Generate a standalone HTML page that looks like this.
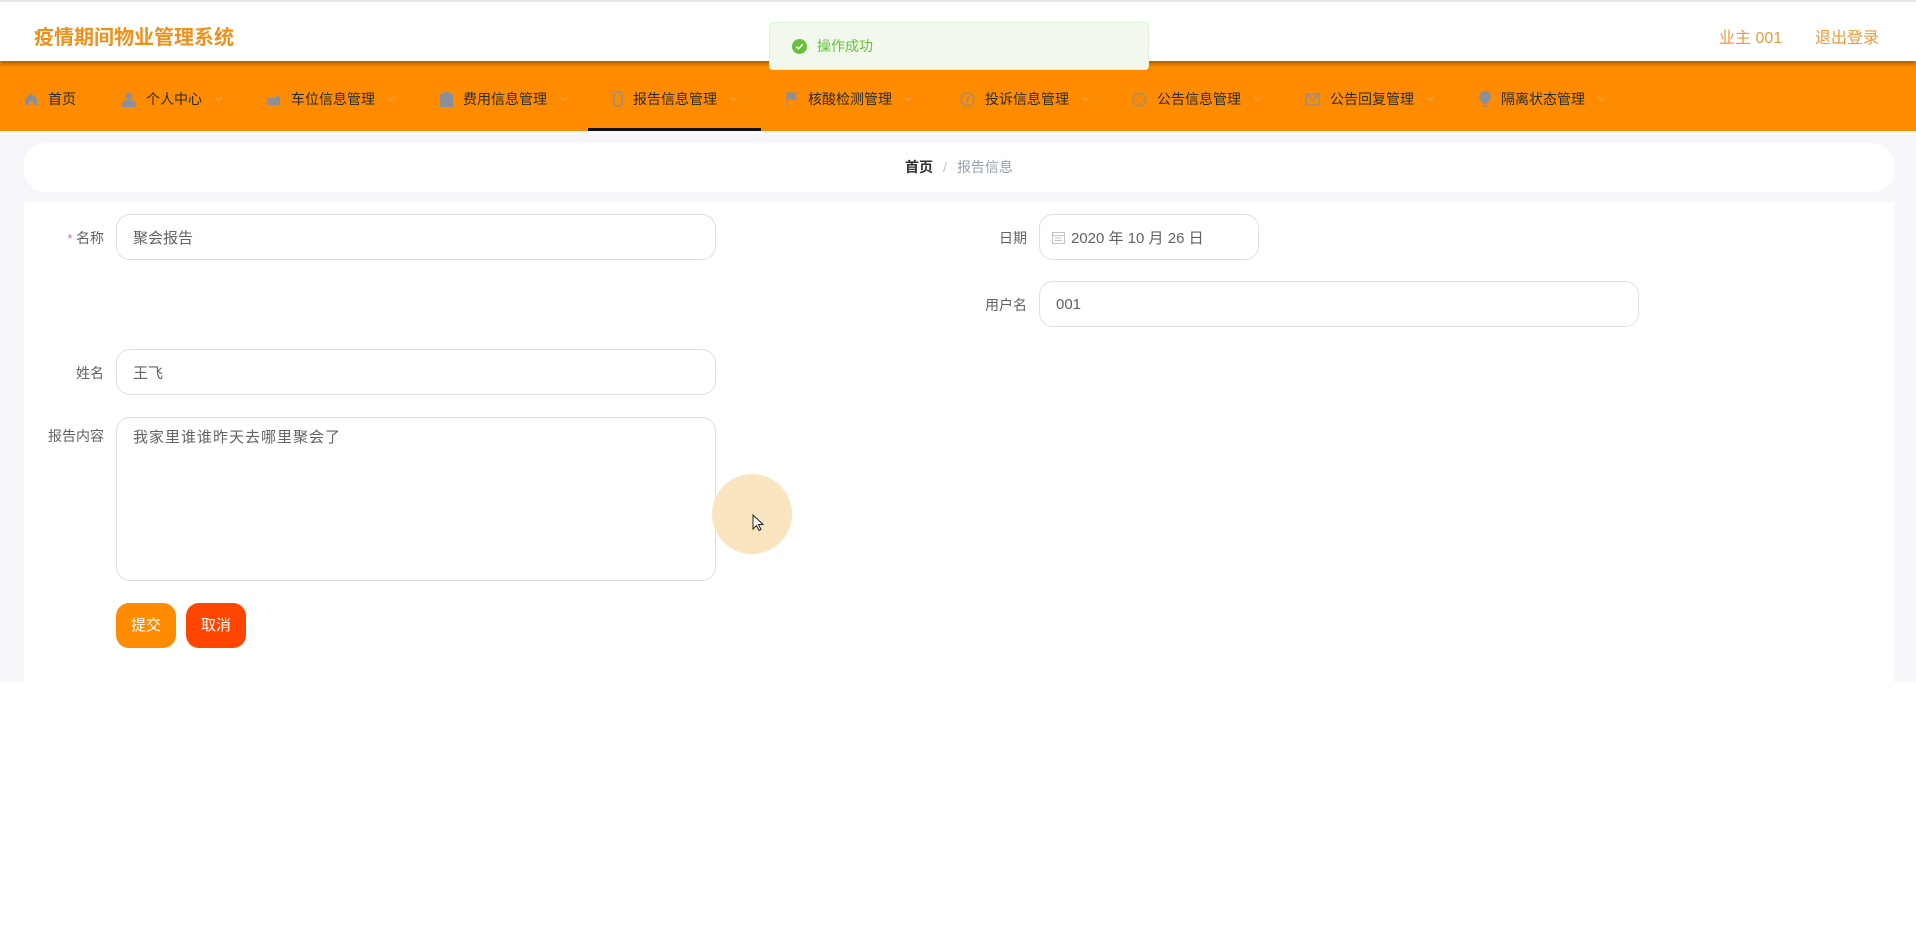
<!DOCTYPE html>
<html><head><meta charset="utf-8"><style>
*{margin:0;padding:0;box-sizing:border-box}
body{width:1916px;height:934px;background:#fff;font-family:"Liberation Sans","Noto Sans CJK SC",sans-serif;position:relative;overflow:hidden}
.abs{position:absolute}
.header{left:0;top:0;width:1916px;height:61px;background:#fff;border-top:2px solid #e6e6e6;box-shadow:0 3px 4px rgba(120,70,0,.6);z-index:3}
.title{left:34px;top:19px;font-size:20px;font-weight:bold;color:#f0901a}
.user{top:22px;font-size:16px;color:#ec9a3c}
.nav{left:0;top:61px;width:1916px;height:70px;background:#ff8c00;z-index:2}
.item{top:3px;height:70px;display:flex;align-items:center;font-size:14px;color:#2b2b2b}
.item svg.i{margin-right:10px}
.arr{margin-left:12px}
.under{left:588px;top:128px;width:173px;height:3px;background:#111;z-index:3}
.gray{left:0;top:131px;width:1916px;height:551px;background:#f5f7fa}
.crumb{left:24px;top:143px;width:1870px;height:49px;background:#fff;border-radius:22px;text-align:center;line-height:49px;font-size:14px}
.card{left:24px;top:202px;width:1870px;height:480px;background:#fff}
.lab{font-size:14px;color:#606266;text-align:right;width:100px}
.inp{border:1px solid #dcdfe6;border-radius:14px;background:#fff;font-size:15px;color:#606266;padding-left:16px;display:flex;align-items:center}
.btn{top:603px;width:60px;height:45px;border-radius:13px;color:#fff;font-size:15px;text-align:center;line-height:45px}
.toast{left:769px;top:22px;width:380px;height:48px;background:#f0f9eb;border:1px solid #e1f3d8;border-radius:4px;z-index:5;display:flex;align-items:center;padding-left:22px;color:#67c23a;font-size:14px}
</style></head><body>
<div class="abs header">
 <div class="abs title">疫情期间物业管理系统</div>
 <div class="abs user" style="left:1719px">业主 001</div>
 <div class="abs user" style="left:1815px">退出登录</div>
</div>
<div class="abs toast"><svg width="15" height="15" viewBox="0 0 16 16" style="margin-right:10px"><circle cx="8" cy="8" r="8" fill="#67c23a"/><path d="M4.5 8.2l2.4 2.3 4.6-4.8" stroke="#fff" stroke-width="1.8" fill="none"/></svg>操作成功</div>
<div class="abs nav">
 <div class="abs item" style="left:24px"><svg class="i" width="14" height="14" viewBox="0 0 14 14"><path d="M7 1L1 7v6h4V9h4v4h4V7z" fill="#8a8f99"/></svg>首页</div>
 <div class="abs item" style="left:122px"><svg class="i" width="14" height="15" viewBox="0 0 14 15"><circle cx="7" cy="4" r="3.5" fill="#8a8f99"/><path d="M0 15v-3c0-2 2-4 7-4s7 2 7 4v3z" fill="#8a8f99"/></svg>个人中心<svg class="arr" width="9" height="6" viewBox="0 0 9 6"><path d="M1 1l3.5 3.5L8 1" stroke="#e6a55a" fill="none"/></svg></div>
 <div class="abs item" style="left:266px"><svg class="i" width="15" height="14" viewBox="0 0 15 14"><path d="M1 6h9V2l4 4v7H1z" fill="#8a8f99"/></svg>车位信息管理<svg class="arr" width="9" height="6" viewBox="0 0 9 6"><path d="M1 1l3.5 3.5L8 1" stroke="#e6a55a" fill="none"/></svg></div>
 <div class="abs item" style="left:440px"><svg class="i" width="13" height="15" viewBox="0 0 13 15"><rect x="0" y="2" width="13" height="13" fill="#8a8f99"/><rect x="4" y="0" width="5" height="3" fill="#8a8f99"/></svg>费用信息管理<svg class="arr" width="9" height="6" viewBox="0 0 9 6"><path d="M1 1l3.5 3.5L8 1" stroke="#e6a55a" fill="none"/></svg></div>
 <div class="abs item" style="left:613px"><svg class="i" width="10" height="16" viewBox="0 0 10 16"><rect x="1" y="1" width="8" height="14" rx="3" fill="none" stroke="#8a8f99" stroke-width="1.5"/></svg>报告信息管理<svg class="arr" width="9" height="6" viewBox="0 0 9 6"><path d="M1 1l3.5 3.5L8 1" stroke="#e6a55a" fill="none"/></svg></div>
 <div class="abs item" style="left:786px"><svg class="i" width="12" height="15" viewBox="0 0 12 15"><path d="M1 0v15M1 1h10l-3 3 3 3H1" fill="#8a8f99" stroke="#8a8f99"/></svg>核酸检测管理<svg class="arr" width="9" height="6" viewBox="0 0 9 6"><path d="M1 1l3.5 3.5L8 1" stroke="#e6a55a" fill="none"/></svg></div>
 <div class="abs item" style="left:960px"><svg class="i" width="15" height="15" viewBox="0 0 15 15"><circle cx="7.5" cy="7.5" r="6.5" fill="none" stroke="#8a8f99" stroke-width="1.3"/><path d="M9 4L6 11" stroke="#8a8f99" stroke-width="1.3"/></svg>投诉信息管理<svg class="arr" width="9" height="6" viewBox="0 0 9 6"><path d="M1 1l3.5 3.5L8 1" stroke="#e6a55a" fill="none"/></svg></div>
 <div class="abs item" style="left:1132px"><svg class="i" width="15" height="15" viewBox="0 0 15 15"><circle cx="7.5" cy="7.5" r="6.5" fill="none" stroke="#8a8f99" stroke-width="1.3"/><path d="M7.5 1v4M7.5 10v4M1 7.5h4M10 7.5h4" stroke="#8a8f99" stroke-width="1.3"/></svg>公告信息管理<svg class="arr" width="9" height="6" viewBox="0 0 9 6"><path d="M1 1l3.5 3.5L8 1" stroke="#e6a55a" fill="none"/></svg></div>
 <div class="abs item" style="left:1305px"><svg class="i" width="15" height="13" viewBox="0 0 15 13"><rect x="1" y="1" width="13" height="11" fill="none" stroke="#8a8f99" stroke-width="1.3"/><path d="M1 1l6.5 6 6.5-6" fill="none" stroke="#8a8f99" stroke-width="1.3"/></svg>公告回复管理<svg class="arr" width="9" height="6" viewBox="0 0 9 6"><path d="M1 1l3.5 3.5L8 1" stroke="#e6a55a" fill="none"/></svg></div>
 <div class="abs item" style="left:1479px"><svg class="i" width="12" height="16" viewBox="0 0 12 16"><path d="M6 0C2.5 0 0 2.5 0 6c0 3 3 5 4 7h4c1-2 4-4 4-7 0-3.5-2.5-6-6-6zM4 14h4v2H4z" fill="#8a8f99"/></svg>隔离状态管理<svg class="arr" width="9" height="6" viewBox="0 0 9 6"><path d="M1 1l3.5 3.5L8 1" stroke="#e6a55a" fill="none"/></svg></div>
</div>
<div class="abs under"></div>
<div class="abs gray"></div>
<div class="abs crumb"><b style="color:#303133">首页</b><span style="color:#c0c4cc;margin:0 10px">/</span><span style="color:#97a0b0">报告信息</span></div>
<div class="abs card"></div>

<div class="abs lab" style="left:4px;top:228px"><span style="color:#f56c6c;font-size:13px">* </span>名称</div>
<div class="abs inp" style="left:116px;top:214px;width:600px;height:46px">聚会报告</div>
<div class="abs lab" style="left:927px;top:228px">日期</div>
<div class="abs inp" style="left:1039px;top:214px;width:220px;height:46px;padding-left:12px"><svg width="13" height="13" viewBox="0 0 13 13" style="margin-right:6px"><rect x="0.5" y="1.5" width="12" height="11" fill="none" stroke="#c0c4cc"/><path d="M0.5 4.5h12M3 7h7M3 9.5h7" stroke="#c0c4cc"/></svg>2020 年 10 月 26 日</div>
<div class="abs lab" style="left:927px;top:295px">用户名</div>
<div class="abs inp" style="left:1039px;top:281px;width:600px;height:46px">001</div>
<div class="abs lab" style="left:4px;top:363px">姓名</div>
<div class="abs inp" style="left:116px;top:349px;width:600px;height:46px">王飞</div>
<div class="abs lab" style="left:4px;top:426px">报告内容</div>
<div class="abs inp" style="left:116px;top:417px;width:600px;height:164px;align-items:flex-start;padding-top:8px;letter-spacing:1px">我家里谁谁昨天去哪里聚会了</div>
<div class="abs btn" style="left:116px;background:#ff8c00">提交</div>
<div class="abs btn" style="left:186px;background:#ff4500">取消</div>
<div class="abs" style="left:712px;top:474px;width:80px;height:80px;border-radius:50%;background:#fbe5c0"></div>
<svg class="abs" style="left:752px;top:514px" width="12" height="18" viewBox="0 0 12 18"><path d="M1 1v14l3.5-3.5 2.5 5 2-1-2.5-5H11z" fill="#fff" stroke="#222" stroke-width="1"/></svg>
</body></html>
